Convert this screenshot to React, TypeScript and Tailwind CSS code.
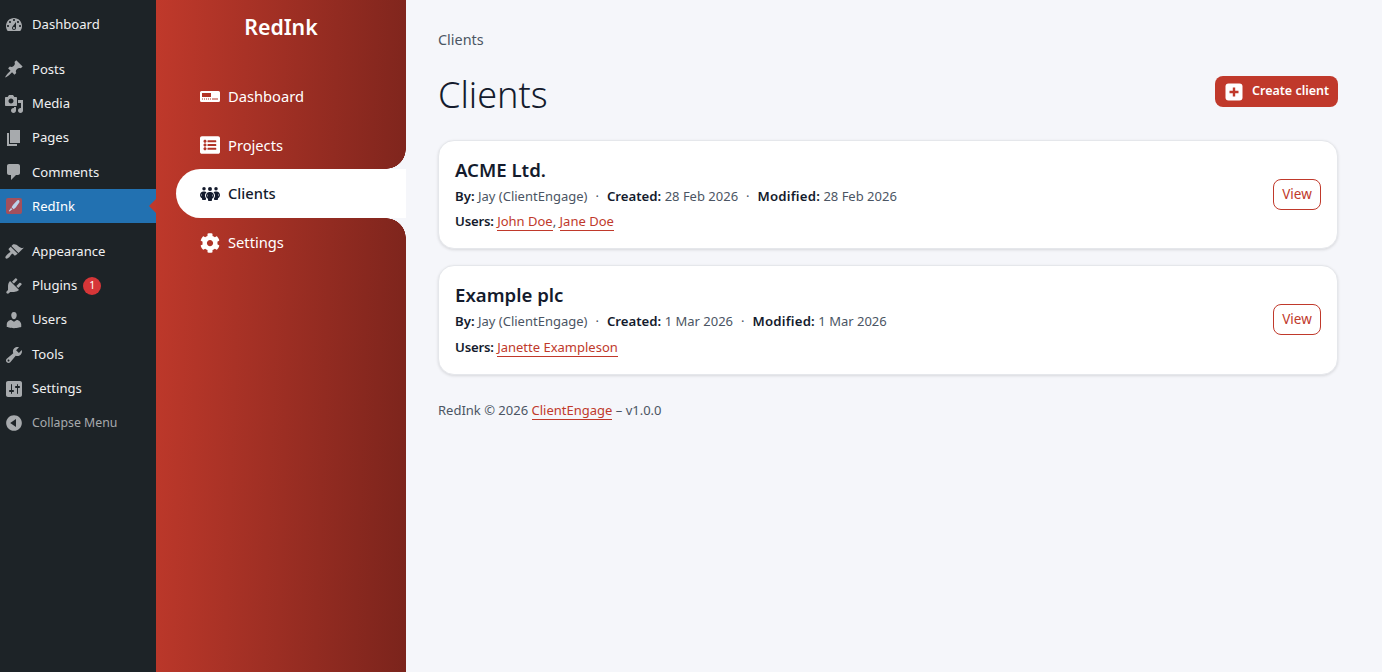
import React from "react";
import { FaListAlt, FaCog } from "react-icons/fa";
import { FaPeopleGroup } from "react-icons/fa6";

const F = "font-['Noto_Sans','Open_Sans',sans-serif]";

const dash: Record<string, string> = {
  dashboard: "M3.76 16h12.48c1.1-1.37 1.76-3.11 1.76-5 0-4.42-3.58-8-8-8s-8 3.58-8 8c0 1.89.66 3.63 1.76 5zM10 4c.55 0 1 .45 1 1s-.45 1-1 1-1-.45-1-1 .45-1 1-1zM6 6c.55 0 1 .45 1 1s-.45 1-1 1-1-.45-1-1 .45-1 1-1zm8 0c.55 0 1 .45 1 1s-.45 1-1 1-1-.45-1-1 .45-1 1-1zm-5.37 5.55L12 7v6c0 1.1-.9 2-2 2s-2-.9-2-2c0-.57.24-1.08.63-1.45zM4 10c.55 0 1 .45 1 1s-.45 1-1 1-1-.45-1-1 .45-1 1-1zm12 0c.55 0 1 .45 1 1s-.45 1-1 1-1-.45-1-1 .45-1 1-1zm-5 3c0-.55-.45-1-1-1s-1 .45-1 1 .45 1 1 1 1-.45 1-1z",
  posts: "M10.44 3.02l1.82-1.82 6.36 6.35-1.83 1.82c-1.05-.68-2.48-.57-3.41.36l-.75.75c-.92.93-1.04 2.35-.35 3.41l-1.83 1.82-2.41-2.41-2.8 2.79c-.42.42-3.38 2.71-3.8 2.29s1.86-3.39 2.28-3.81l2.79-2.79L4.1 9.36l1.83-1.82c1.05.69 2.48.57 3.4-.36l.75-.75c.93-.92 1.05-2.35.36-3.41z",
  media: "M13 11V4c0-.55-.45-1-1-1h-1.67L9 1H5L3.67 3H2c-.55 0-1 .45-1 1v7c0 .55.45 1 1 1h10c.55 0 1-.45 1-1zM7 4.5c1.38 0 2.5 1.12 2.5 2.5S8.38 9.5 7 9.5 4.5 8.38 4.5 7 5.62 4.5 7 4.5zM14 6h5v10.5c0 1.38-1.12 2.5-2.5 2.5S14 17.88 14 16.5s1.12-2.5 2.5-2.5c.17 0 .34.02.5.05V9h-3V6zm-4 8.05V13h2v3.5c0 1.38-1.12 2.5-2.5 2.5S7 17.88 7 16.5 8.12 14 9.5 14c.17 0 .34.02.5.05z",
  pages: "M6 15V2h10v13H6zm-1 1h8v2H3V5h2v11z",
  comments: "M5 2h9c1.1 0 2 .9 2 2v7c0 1.1-.9 2-2 2h-2l-5 5v-5H5c-1.1 0-2-.9-2-2V4c0-1.1.9-2 2-2z",
  appearance: "M14.48 11.06L7.41 3.99l1.5-1.5c.5-.56 2.3-.47 3.51.32 1.21.8 1.43 1.28 2.91 2.1 1.18.64 2.45 1.26 4.45.85zm-.71.71L6.7 4.7 4.93 6.47c-.39.39-.39 1.02 0 1.41l1.06 1.06c.39.39.39 1.03 0 1.42-.6.6-1.43 1.11-2.21 1.69-.35.26-.7.53-1.01.84-1.34 1.35-1.78 2.76-1.06 3.48.71.71 2.12.27 3.47-1.08.31-.31.58-.66.85-1.01.58-.78 1.09-1.61 1.69-2.21.39-.39 1.02-.39 1.41 0l1.06 1.06c.39.39 1.02.39 1.41 0z",
  plugins: "M13.11 4.36L9.87 7.6 8 5.73l3.24-3.24c.35-.34 1.05-.2 1.56.32.52.51.66 1.21.31 1.55zm-8 1.77l.91-1.12 9.01 9.01-1.19.84c-.71.71-2.63 1.16-3.82 1.16H6.14L4.9 17.26c-.59.59-1.54.59-2.12 0-.59-.58-.59-1.53 0-2.12l1.24-1.24v-3.88c0-1.13.4-3.19 1.09-3.89zm7.26 3.97l3.24-3.24c.34-.35 1.04-.21 1.55.31.52.51.66 1.21.31 1.55l-3.24 3.25z",
  users: "M10 9.25c-2.27 0-2.73-3.44-2.73-3.44C7 4.02 7.82 2 9.97 2c2.16 0 2.98 2.02 2.71 3.81 0 0-.41 3.44-2.68 3.44zm0 2.57L12.72 10c2.39 0 4.52 2.33 4.52 4.53v2.49s-3.65 1.13-7.24 1.13c-3.65 0-7.24-1.13-7.24-1.13v-2.49c0-2.25 1.94-4.53 4.47-4.53z",
  tools: "M16.68 9.77c-1.34 1.34-3.3 1.67-4.95.99l-5.41 6.52c-.99.99-2.59.99-3.58 0s-.99-2.59 0-3.57l6.52-5.42c-.68-1.65-.35-3.61.99-4.95 1.28-1.28 3.12-1.62 4.72-1.06l-2.89 2.89 2.82 2.82 2.86-2.87c.53 1.58.18 3.39-1.08 4.67zM3.81 16.21c.4.39 1.04.39 1.43 0 .4-.4.4-1.04 0-1.43-.39-.4-1.03-.4-1.43 0-.39.39-.39 1.03 0 1.43z",
  settings: "M18 16V4c0-1.1-.9-2-2-2H4c-1.1 0-2 .9-2 2v12c0 1.1.9 2 2 2h12c1.1 0 2-.9 2-2zM8 11h1c.55 0 1 .45 1 1s-.45 1-1 1H8v1.5c0 .28-.22.5-.5.5s-.5-.22-.5-.5V13H6c-.55 0-1-.45-1-1s.45-1 1-1h1V5.5c0-.28.22-.5.5-.5s.5.22.5.5V11zm5-2h-1c-.55 0-1-.45-1-1s.45-1 1-1h1V5.5c0-.28.22-.5.5-.5s.5.22.5.5V7h1c.55 0 1 .45 1 1s-.45 1-1 1h-1v5.5c0 .28-.22.5-.5.5s-.5-.22-.5-.5V9z",
  collapse: "M10 2.16c4.33 0 7.84 3.51 7.84 7.84s-3.51 7.84-7.84 7.84S2.16 14.33 2.16 10 5.71 2.16 10 2.16zm2 11.72V6.12L6.18 9.97z",
};

function Dash({ name }: { name: string }) {
  return (
    <svg viewBox="0 0 20 20" className="w-5 h-5 fill-[#a7aaad] shrink-0">
      <path d={dash[name]} />
    </svg>
  );
}

function WpItem({ icon, label, badge }: { icon: string; label: string; badge?: boolean }) {
  return (
    <div className="h-[34.3px] flex items-center pl-[4px] text-[#f0f0f1] text-[13.1px]">
      <Dash name={icon} />
      <span className="ml-[8px]">{label}</span>
      {badge && (
        <span className="ml-[6px] w-[18px] h-[18px] rounded-full bg-[#d63638] text-white text-[10.5px] flex items-center justify-center">1</span>
      )}
    </div>
  );
}

function WpMenu() {
  return (
    <aside className="w-[156px] shrink-0 bg-[#1d2327]">
      <div className="pt-[8px]">
        <WpItem icon="dashboard" label="Dashboard" />
      </div>
      <div className="mt-[10px]">
        <WpItem icon="posts" label="Posts" />
        <WpItem icon="media" label="Media" />
        <WpItem icon="pages" label="Pages" />
        <WpItem icon="comments" label="Comments" />
        <div className="relative h-[34px] bg-[#2271b1] flex items-center pl-[6px] text-white text-[13.1px]">
          <span className="w-4 h-4 rounded-[2px] bg-[#a3505c] flex items-center justify-center shrink-0">
            <svg viewBox="0 0 16 16" className="w-[14px] h-[14px] fill-[#bcd3ea]">
              <path d="M13.6 1.4c1 .8.8 2 .2 3L10 9.6 7.6 11.6 5.2 9.4 7 6.6l4-4.4c.8-.8 1.800-1.400 2.600-.8z" />
              <path d="M4.600 10.200l1.600 1.500-3.400 2.600-.8-.6z" />
            </svg>
          </span>
          <span className="ml-[10px]">RedInk</span>
          <span className="absolute right-0 top-[10px] w-0 h-0 border-y-[7px] border-y-transparent border-r-[7px] border-r-[#c0392b]" />
        </div>
      </div>
      <div className="mt-[11px]">
        <WpItem icon="appearance" label="Appearance" />
        <WpItem icon="plugins" label="Plugins" badge />
        <WpItem icon="users" label="Users" />
        <WpItem icon="tools" label="Tools" />
        <WpItem icon="settings" label="Settings" />
        <div className="h-[34px] flex items-center pl-[4px] text-[#a7aaad] text-[12.3px]">
          <Dash name="collapse" />
          <span className="ml-[8px]">Collapse Menu</span>
        </div>
      </div>
    </aside>
  );
}

function NavIconDash() {
  return (
    <svg viewBox="0 0 20 11" className="w-5 h-[11px] shrink-0">
      <path fillRule="evenodd" fill="#fff" d="M1.500 0h17A1.500 1.500 0 0 1 20 1.500v8a1.500 1.500 0 0 1-1.500 1.500h-17A1.500 1.500 0 0 1 0 9.500v-8A1.500 1.500 0 0 1 1.500 0zM2 2v4h9V2zM2 7.500v1h1v-1zM4 7.500v1h1v-1zM6 7.500v1h1v-1zM8 7.500v1h1v-1zM10 7.500v1h1v-1zM12 7.500v1h6v-1z" />
    </svg>
  );
}

const rowText = "flex items-center pl-[44px] gap-[8px] text-[14.7px] text-white";
const b = "font-semibold text-[13.2px] text-[#141b2d]";

function AppNav() {
  return (
    <nav className="w-[250px] shrink-0 self-stretch bg-[linear-gradient(92deg,#c0392b,#7b241c)]">
      <div className="h-[72px] pt-[9px] text-center text-white text-[21.3px] font-semibold leading-[36px]">RedInk</div>
      <div className={`h-[49px] ${rowText}`}>
        <span className="w-5 flex justify-center"><NavIconDash /></span>
        <span>Dashboard</span>
      </div>
      <div className={`h-[48px] ${rowText}`}>
        <span className="w-5 flex justify-center"><FaListAlt className="text-[20px]" /></span>
        <span>Projects</span>
      </div>
      <div className="relative ml-[20px] h-[49px] bg-white rounded-l-[24.5px] flex items-center pl-[24px] gap-[8px] text-[#141b2d] text-[14.7px] font-medium">
        <span className="absolute right-0 bottom-full w-5 h-5 bg-[radial-gradient(circle_at_0_0,transparent_19.5px,#f5f6fa_20px)]" />
        <span className="absolute right-0 top-full w-5 h-5 bg-[radial-gradient(circle_at_0_100%,transparent_19.5px,#f5f6fa_20px)]" />
        <span className="w-5 flex justify-center"><FaPeopleGroup className="text-[20px]" /></span>
        <span>Clients</span>
      </div>
      <div className={`h-[49px] ${rowText}`}>
        <span className="w-5 flex justify-center"><FaCog className="text-[20px]" /></span>
        <span>Settings</span>
      </div>
    </nav>
  );
}

function Sep() {
  return <span className="mx-[8px]">·</span>;
}

function Card({ name, date, users, h, gap }: { name: string; date: string; users: string[]; h: string; gap: string }) {
  return (
    <section className={`${h} bg-white rounded-[16px] border border-[#e5e7eb] shadow-[0_1px_3px_rgba(0,0,0,0.12)] flex items-center justify-between pl-4 pr-4`}>
      <div className="self-start pt-4">
        <h2 className="text-[18.6px] font-semibold text-[#141b2d] leading-[26px]">{name}</h2>
        <p className="mt-[3px] text-[13px] leading-[20px] text-[#4b5563] whitespace-pre">
          <b className={b}>By:</b> Jay (ClientEngage)<Sep /><b className={b}>Created:</b> {date}<Sep /><b className={`${b} tracking-[0.2px]`}>Modified:</b> {date}
        </p>
        <p className={`${gap} text-[13px] leading-[20px] text-[#4b5563]`}>
          <b className={`${b} tracking-[-0.2px]`}>Users:</b>{" "}
          {users.map((u, i) => (
            <React.Fragment key={u}>
              {i > 0 && ", "}
              <a className="text-[#c0392b] border-b border-[#c0392b]">{u}</a>
            </React.Fragment>
          ))}
        </p>
      </div>
      <button className="w-[48px] h-[31px] rounded-[8px] border border-[#c0392b] text-[#c0392b] text-[13.5px] bg-white flex items-center justify-center -mt-[1px]">View</button>
    </section>
  );
}

export default function App() {
  return (
    <div className={`${F} flex min-h-[672px] bg-[#f5f6fa]`}>
      <WpMenu />
      <AppNav />
      <main className="flex-1 pl-[32px] pr-[44px] pt-[29px]">
        <div className="text-[14.4px] leading-[22px] text-[#4b5563]">Clients</div>
        <div className="mt-[10px] flex items-center justify-between h-[64px]">
          <h1 className="text-[36px] font-light text-[#141b2d] leading-[64px] mt-[3px]">Clients</h1>
          <button className="h-[31px] w-[123px] -mt-[3px] rounded-[8px] bg-[#c0392b] text-white text-[12.5px] font-semibold flex items-center pl-[10px] gap-[9px]">
            <svg viewBox="0 0 18 18" className="w-[18px] h-[18px] shrink-0">
              <rect x="0.5" y="0.5" width="17" height="17" rx="3" fill="#fff" />
              <path d="M7.800 4.500h2.400v3.300h3.300v2.400h-3.300v3.300H7.800v-3.300H4.500V7.800h3.300z" fill="#c0392b" />
            </svg>
            Create client
          </button>
        </div>
        <div className="mt-[15px] flex flex-col gap-[16px]">
          <Card name="ACME Ltd." date="28 Feb 2026" users={["John Doe", "Jane Doe"]} h="h-[109px]" gap="mt-[5px]" />
          <Card name="Example plc" date="1 Mar 2026" users={["Janette Exampleson"]} h="h-[110px]" gap="mt-[6px]" />
        </div>
        <footer className="mt-[25px] text-[13px] leading-[20px] text-[#4b5563]">
          RedInk © 2026 <a className="text-[#c0392b] border-b border-[#c0392b]">ClientEngage</a> – v1.0.0
        </footer>
      </main>
    </div>
  );
}
